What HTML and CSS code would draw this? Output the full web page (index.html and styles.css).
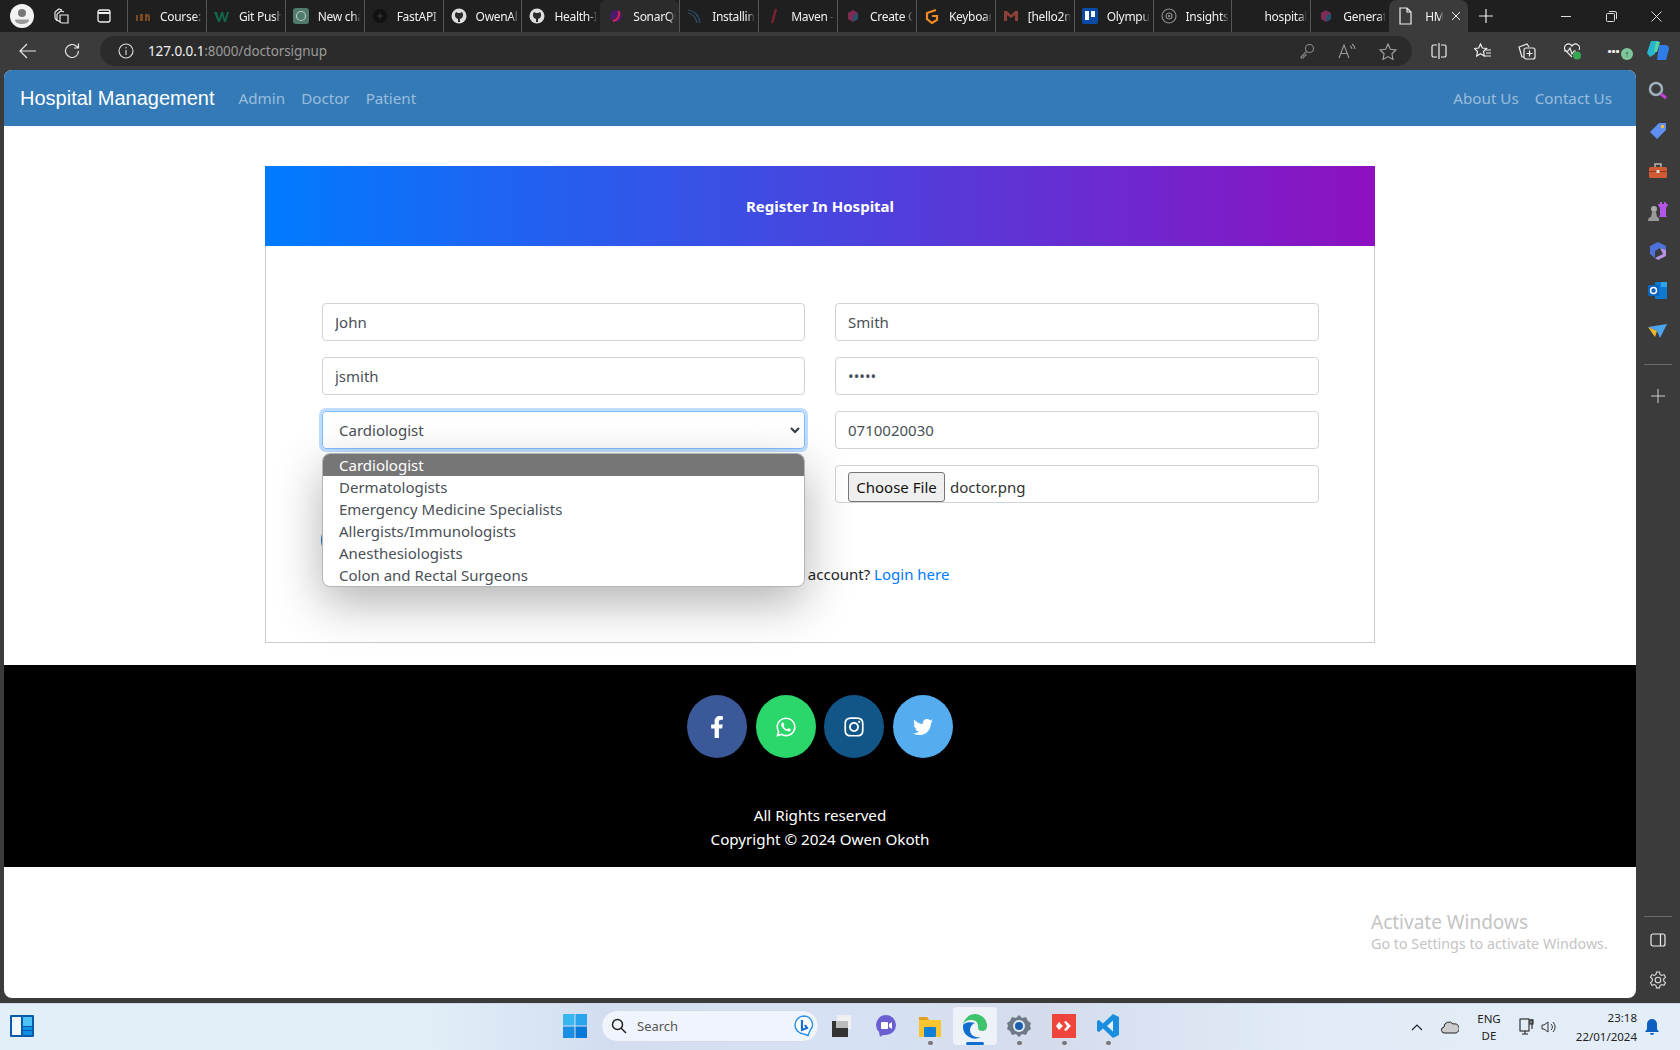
FILE: index.html
```html
<!DOCTYPE html>
<html lang="en">
<head>
<meta charset="utf-8">
<title>HMS</title>
<link rel="stylesheet" href="styles.css">
</head>
<body>
<header class="tabstrip">
  <div class="strip-left">
    <span class="avatar"><svg width="24" height="24" viewBox="0 0 24 24"><circle cx="12" cy="12" r="12" fill="#f2f2f2"/><circle cx="12" cy="9" r="4" fill="#777"/><path d="M5 15.5h14c0 3-3 4.5-7 4.5s-7-1.500-7-4.500z" fill="#999"/></svg></span>
    <svg class="strip-ico" width="18" height="18" viewBox="0 0 18 18" fill="none" stroke="#e8e8e8" stroke-width="1.200"><path d="M2 5l4-3 3 1M4 7l4-3 3 1M7 8h8v8H9a2 2 0 0 1-2-2zM2 5v6l2 3M4 7v6l3 2"/></svg>
    <svg class="strip-ico2" width="16" height="16" viewBox="0 0 16 16" fill="none" stroke="#eee" stroke-width="1.300"><rect x="2" y="2" width="12" height="12" rx="2"/><path d="M2 5h12" stroke-width="2"/></svg>
  </div>
  <div class="tabs">
    <div class="tab"><svg class="fav" width="16" height="16" viewBox="0 0 16 16"><path d="M1 13V7h2v6zm4 0V6h3v7zm5 0V6h2a3 3 0 0 1 3 3v4h-2V9h-1v4z" fill="#7a4a22"/></svg><span class="tab-label">Course:</span></div>
    <div class="tab"><svg class="fav" width="16" height="16" viewBox="0 0 16 16"><path d="M0 4h3l2 7 2-7h2l2 7 2-7h2l-3 10h-2L8 8l-2 6H4z" fill="#14664a"/></svg><span class="tab-label">Git Push</span></div>
    <div class="tab"><svg class="fav" width="16" height="16" viewBox="0 0 16 16"><rect width="16" height="16" rx="3" fill="#4f7a6c"/><circle cx="8" cy="8" r="4.500" fill="none" stroke="#b7c9c3" stroke-width="1.200"/></svg><span class="tab-label">New cha</span></div>
    <div class="tab"><svg class="fav" width="16" height="16" viewBox="0 0 16 16"><circle cx="8" cy="8" r="7" fill="#111"/><path d="M9 3L5 9h3l-1 4 4-6H8z" fill="#333"/></svg><span class="tab-label">FastAPI</span></div>
    <div class="tab"><svg class="fav" width="16" height="16" viewBox="0 0 16 16"><circle cx="8" cy="8" r="7.500" fill="#ddd"/><path d="M4 6l1-2 2 1h2l2-1 1 2v2l-1 2-2 1v3H7v-3L5 10 4 8z" fill="#2a2a2a"/></svg><span class="tab-label">OwenAl</span></div>
    <div class="tab"><svg class="fav" width="16" height="16" viewBox="0 0 16 16"><circle cx="8" cy="8" r="7.500" fill="#ddd"/><path d="M4 6l1-2 2 1h2l2-1 1 2v2l-1 2-2 1v3H7v-3L5 10 4 8z" fill="#2a2a2a"/></svg><span class="tab-label">Health-I</span></div>
    <div class="tab tab-hover"><svg class="fav" width="16" height="16" viewBox="0 0 16 16"><circle cx="8" cy="8" r="6" fill="#4a1a6b"/><path d="M5 13c5-1 7-5 6-10" stroke="#d8234f" stroke-width="2" fill="none"/></svg><span class="tab-label">SonarQu</span></div>
    <div class="tab"><svg class="fav" width="16" height="16" viewBox="0 0 16 16" fill="none" stroke="#31506b" stroke-width="1.200"><path d="M1 2c7 1 11 6 12 13M1 5c5 1 8 5 9 10"/></svg><span class="tab-label">Installing</span></div>
    <div class="tab"><svg class="fav" width="16" height="16" viewBox="0 0 16 16"><path d="M10 1L6 15" stroke="#7c2233" stroke-width="2.400"/></svg><span class="tab-label">Maven -</span></div>
    <div class="tab"><svg class="fav" width="16" height="16" viewBox="0 0 16 16"><path d="M8 2l5 3v6l-5 3-5-3V5z" fill="#7d2c55"/><path d="M8 8l5-3v6l-5 3z" fill="#26506b"/></svg><span class="tab-label">Create C</span></div>
    <div class="tab"><svg class="fav" width="16" height="16" viewBox="0 0 16 16" fill="none" stroke="#f08a24" stroke-width="2.200"><path d="M12 2L3 5v6l5 4 5-3V8H8"/></svg><span class="tab-label">Keyboar</span></div>
    <div class="tab"><svg class="fav" width="16" height="16" viewBox="0 0 16 16"><path d="M1 3h3l4 4 4-4h3v10h-3V7L8 10 4 7v6H1z" fill="#8d4038"/></svg><span class="tab-label">[hello2m</span></div>
    <div class="tab"><svg class="fav" width="16" height="16" viewBox="0 0 16 16"><rect width="16" height="16" rx="2" fill="#0b4ba8"/><rect x="3" y="3" width="4" height="9" fill="#fff"/><rect x="9" y="3" width="4" height="6" fill="#fff"/></svg><span class="tab-label">Olympu</span></div>
    <div class="tab"><svg class="fav" width="16" height="16" viewBox="0 0 16 16" fill="none" stroke="#8a8a8a" stroke-width="1.200"><circle cx="8" cy="8" r="7"/><circle cx="8" cy="8" r="3"/><circle cx="8" cy="8" r=".6"/></svg><span class="tab-label">Insights</span></div>
    <div class="tab"><span class="fav"></span><span class="tab-label">hospital</span></div>
    <div class="tab"><svg class="fav" width="16" height="16" viewBox="0 0 16 16"><path d="M8 2l5 3v6l-5 3-5-3V5z" fill="#7d2c55"/><path d="M8 8l5-3v6l-5 3z" fill="#26506b"/></svg><span class="tab-label">Generat</span></div>
    <div class="tab tab-active"><svg class="fav" width="16" height="18" viewBox="0 0 16 18" fill="none" stroke="#eee" stroke-width="1.200"><path d="M3 1h7l4 4v12H3zM10 1v4h4"/></svg><span class="tab-label short">HMS</span><svg class="tab-close" width="10" height="10" viewBox="0 0 10 10" stroke="#eee"><path d="M1 1l8 8M9 1l-8 8"/></svg></div>
    <svg class="new-tab" width="14" height="14" viewBox="0 0 14 14" stroke="#eee" stroke-width="1.200"><path d="M7 0v14M0 7h14"/></svg>
  </div>
  <div class="win-controls">
    <svg width="10" height="10" viewBox="0 0 10 10" stroke="#ddd"><path d="M0 5.500h10"/></svg>
    <svg width="11" height="11" viewBox="0 0 11 11" stroke="#ddd" fill="none"><rect x=".5" y="2.500" width="8" height="8" rx="1"/><path d="M3 .5h6a1.500 1.500 0 0 1 1.500 1.500v6"/></svg>
    <svg width="11" height="11" viewBox="0 0 11 11" stroke="#ddd"><path d="M.5.5l10 10M10.500.5l-10 10"/></svg>
  </div>
</header>

<div class="toolbar">
  <svg class="nav-back" width="18" height="16" viewBox="0 0 18 16" fill="none" stroke="#e6e6e6" stroke-width="1.200"><path d="M17 8H1M8 1L1 8l7 7"/></svg>
  <svg class="nav-reload" width="18" height="18" viewBox="0 0 18 18" fill="none" stroke="#e6e6e6" stroke-width="1.200"><path d="M15.500 9a6.500 6.500 0 1 1-2-4.700L15.500 6M15.500 1.500V6H11"/></svg>
  <div class="address">
    <svg class="info" width="16" height="16" viewBox="0 0 16 16" fill="none" stroke="#ddd" stroke-width="1.100"><circle cx="8" cy="8" r="7"/><path d="M8 7v5M8 4v1.500"/></svg>
    <span class="url"><span class="url-host">127.0.0.1</span>:8000/doctorsignup</span>
    <span class="addr-icons">
      <svg width="16" height="16" viewBox="0 0 16 16" fill="none" stroke="#8a8a8a" stroke-width="1.100"><circle cx="10.500" cy="5.500" r="4"/><path d="M7.500 8.500L2 14v1h2l1-1v-1h1l1-1v-1"/></svg>
      <svg width="18" height="16" viewBox="0 0 18 16" fill="none" stroke="#9a9a9a" stroke-width="1.100"><path d="M1 15L6 2l5 13M3 10.500h6M12 3a4 4 0 0 1 2 3M14 1a7 7 0 0 1 3 5"/></svg>
      <svg width="18" height="17" viewBox="0 0 18 17" fill="none" stroke="#a5a5a5" stroke-width="1.100"><path d="M9 1l2.400 5.200 5.600.7-4.100 3.900 1.100 5.600L9 13.600l-5 2.800 1.100-5.600L1 6.900l5.600-.7z"/></svg>
    </span>
  </div>
  <div class="tool-icons">
    <svg width="16" height="16" viewBox="0 0 16 16" fill="none" stroke="#eee" stroke-width="1.200"><path d="M6 2H2.500A1.500 1.500 0 0 0 1 3.500v9A1.500 1.500 0 0 0 2.500 14H6M10 2h3.500A1.500 1.500 0 0 1 15 3.500v9a1.500 1.500 0 0 1-1.500 1.500H10M8 0v16"/></svg>
    <svg width="18" height="17" viewBox="0 0 18 17" fill="none" stroke="#eee" stroke-width="1.200"><path d="M6.500 1l1.800 4 4.200.5-3 3 .8 4.500-3.800-2.200L2.700 13l.8-4.500-3-3 4.200-.5zM12 7h5M12 10h5M11 13h6"/></svg>
    <svg width="18" height="18" viewBox="0 0 18 18" fill="none" stroke="#eee" stroke-width="1.200"><path d="M6 15H4L1 5l8-3 2 3"/><rect x="6" y="6" width="11" height="11" rx="2"/><path d="M11.500 8.500v6M8.500 11.500h6"/></svg>
    <svg width="18" height="18" viewBox="0 0 18 18" fill="none" stroke="#eee" stroke-width="1.200"><path d="M9 15L2 8a4 4 0 0 1 7-4 4 4 0 0 1 7 4M1 9h4l2-3 2 6 2-3h2"/><circle cx="14" cy="13.500" r="4" fill="#38a853" stroke="none"/></svg>
    <span class="more">···<span class="update">↑</span></span>
  </div>
  <svg class="copilot" width="24" height="24" viewBox="0 0 24 24"><path d="M5 2h8L9 15 4 18l-3-4z" fill="#28b3cf"/><path d="M13 6h6a4 4 0 0 1 4 4l-3 11h-9z" fill="#2f7ce8"/><path d="M10 3h4l-3 10H8z" fill="#55d6a0"/></svg>
</div>

<div class="browser-body">
  <main class="page">
    <nav class="navbar">
      <a class="brand">Hospital Management</a>
      <a class="nav-link">Admin</a>
      <a class="nav-link">Doctor</a>
      <a class="nav-link">Patient</a>
      <span class="nav-spacer"></span>
      <a class="nav-link">About Us</a>
      <a class="nav-link">Contact Us</a>
    </nav>

    <section class="card">
      <div class="card-head">Register In Hospital</div>
      <form class="card-body">
        <div class="form-grid">
          <input class="field" value="John">
          <input class="field" value="Smith">
          <input class="field" value="jsmith">
          <input class="field" type="password" value="12345">
          <div class="select-wrap">
            <div class="select-box">Cardiologist<svg class="chev" width="10" height="7" viewBox="0 0 10 7" fill="none" stroke="#343a40" stroke-width="2"><path d="M1 1l4 4 4-4"/></svg></div>
            <ul class="dropdown">
              <li class="opt opt-on">Cardiologist</li>
              <li class="opt">Dermatologists</li>
              <li class="opt">Emergency Medicine Specialists</li>
              <li class="opt">Allergists/Immunologists</li>
              <li class="opt">Anesthesiologists</li>
              <li class="opt">Colon and Rectal Surgeons</li>
            </ul>
          </div>
          <input class="field" value="0710020030">
          <input class="field" value="">
          <div class="file-box"><span class="file-btn">Choose File</span><span>doctor.png</span></div>
        </div>
        <button class="submit" type="button"></button>
        <p class="login-line">Already have an account? <a class="login-link">Login here</a></p>
      </form>
    </section>

    <footer class="footer">
      <div class="socials">
        <span class="social fb"><svg width="14" height="22" viewBox="0 0 320 512"><path fill="#fff" d="M279.14 288l14.22-92.66h-88.91v-60.13c0-25.35 12.42-50.06 52.24-50.06h40.42V6.26S260.43 0 225.36 0c-73.22 0-121.08 44.38-121.08 124.72v70.62H22.89V288h81.39v224h100.17V288z"/></svg></span>
        <span class="social wa"><svg width="20" height="22" viewBox="0 0 448 512"><path fill="#fff" d="M380.9 97.1C339 55.1 283.2 32 223.9 32c-122.4 0-222 99.6-222 222 0 39.1 10.2 77.3 29.6 111L0 480l117.7-30.9c32.4 17.7 68.9 27 106.1 27h.1c122.3 0 224.1-99.6 224.1-222 0-59.3-25.2-115-67.1-157zm-157 341.6c-33.2 0-65.7-8.9-94-25.7l-6.7-4-69.8 18.3L72 359.2l-4.4-7c-18.5-29.4-28.2-63.3-28.2-98.2 0-101.7 82.8-184.5 184.6-184.5 49.3 0 95.6 19.2 130.4 54.1 34.8 34.9 56.2 81.2 56.1 130.5 0 101.8-84.9 184.6-186.6 184.6zm101.2-138.2c-5.5-2.8-32.8-16.2-37.9-18-5.1-1.9-8.8-2.8-12.5 2.8-3.7 5.6-14.3 18-17.6 21.8-3.2 3.7-6.5 4.2-12 1.4-32.6-16.3-54-29.1-75.5-66-5.7-9.8 5.7-9.1 16.3-30.3 1.8-3.7.9-6.9-.5-9.7-1.4-2.8-12.5-30.1-17.1-41.2-4.5-10.8-9.1-9.3-12.5-9.5-3.2-.2-6.9-.2-10.6-.2-3.7 0-9.7 1.4-14.8 6.9-5.1 5.6-19.4 19-19.4 46.3 0 27.3 19.9 53.7 22.6 57.4 2.8 3.7 39.1 59.7 94.8 83.8 35.2 15.2 49 16.5 66.6 13.9 10.7-1.6 32.8-13.4 37.4-26.4 4.6-13 4.6-24.1 3.2-26.4-1.3-2.5-5-3.9-10.5-6.6z"/></svg></span>
        <span class="social ig"><svg width="20" height="22" viewBox="0 0 448 512"><path fill="#fff" d="M224.1 141c-63.6 0-114.9 51.3-114.9 114.9s51.3 114.9 114.9 114.9S339 319.5 339 255.9 287.7 141 224.1 141zm0 189.6c-41.1 0-74.7-33.5-74.7-74.7s33.5-74.7 74.7-74.7 74.7 33.5 74.7 74.7-33.6 74.7-74.7 74.7zm146.4-194.3c0 14.9-12 26.8-26.8 26.8-14.9 0-26.8-12-26.8-26.8s12-26.8 26.8-26.8 26.8 12 26.8 26.8zm76.1 27.2c-1.7-35.9-9.9-67.7-36.2-93.9-26.2-26.2-58-34.4-93.9-36.2-37-2.1-147.9-2.1-184.9 0-35.8 1.7-67.6 9.9-93.9 36.1s-34.4 58-36.2 93.9c-2.1 37-2.1 147.9 0 184.9 1.7 35.9 9.9 67.7 36.2 93.9s58 34.4 93.9 36.2c37 2.1 147.9 2.1 184.9 0 35.9-1.7 67.7-9.9 93.9-36.2 26.2-26.2 34.4-58 36.2-93.9 2.1-37 2.1-147.8 0-184.8zM398.8 388c-7.8 19.6-22.9 34.7-42.6 42.6-29.5 11.7-99.5 9-132.1 9s-102.7 2.6-132.1-9c-19.6-7.8-34.7-22.9-42.6-42.6-11.7-29.5-9-99.5-9-132.1s-2.6-102.7 9-132.1c7.8-19.6 22.9-34.7 42.6-42.6 29.5-11.7 99.5-9 132.1-9s102.7-2.6 132.1 9c19.6 7.800 34.7 22.9 42.6 42.6 11.7 29.5 9 99.5 9 132.1s2.7 102.7-9 132.1z"/></svg></span>
        <span class="social tw"><svg width="20" height="20" viewBox="0 0 512 512"><path fill="#fff" d="M459.37 151.716c.325 4.548.325 9.097.325 13.645 0 138.72-105.583 298.558-298.558 298.558-59.452 0-114.68-17.219-161.137-47.106 8.447.974 16.568 1.299 25.34 1.299 49.055 0 94.213-16.568 130.274-44.832-46.132-.975-84.792-31.188-98.112-72.772 6.498.974 12.995 1.624 19.818 1.624 9.421 0 18.843-1.3 27.614-3.573-48.081-9.747-84.143-51.98-84.143-102.985v-1.299c13.969 7.797 30.214 12.67 47.431 13.319-28.264-18.843-46.781-51.005-46.781-87.391 0-19.492 5.197-37.36 14.294-52.954 51.655 63.675 129.3 105.258 216.365 109.807-1.624-7.797-2.599-15.918-2.599-24.04 0-57.828 46.782-104.934 104.934-104.934 30.213 0 57.502 12.67 76.67 33.137 23.715-4.548 46.456-13.32 66.599-25.34-7.798 24.366-24.366 44.833-46.132 57.827 21.117-2.273 41.584-8.122 60.426-16.243-14.292 20.791-32.161 39.308-52.628 54.253z"/></svg></span>
      </div>
      <p class="foot-text">All Rights reserved<br>Copyright © 2024 Owen Okoth</p>
    </footer>

    <div class="watermark">
      <div class="wm-title">Activate Windows</div>
      <div class="wm-sub">Go to Settings to activate Windows.</div>
    </div>
  </main>

  <aside class="sidebar">
    <svg width="20" height="20" viewBox="0 0 20 20" fill="none"><circle cx="8" cy="8" r="6" stroke="#9fb0bd" stroke-width="2.500"/><path d="M13 13l5 4" stroke="#c341d8" stroke-width="3"/></svg>
    <svg width="20" height="20" viewBox="0 0 20 20"><path d="M11 2h7v7l-9 9-7-7z" fill="#5f8ff0"/><circle cx="14.500" cy="5.500" r="1.800" fill="#f2c230"/></svg>
    <svg width="20" height="20" viewBox="0 0 20 20"><path d="M7 6V3h6v3" fill="none" stroke="#bbb" stroke-width="1.400"/><rect x="1" y="6" width="18" height="11" rx="1.500" fill="#cf5a33"/><rect x="1" y="10" width="18" height="1" fill="#8f3a1e"/><rect x="8.500" y="9" width="3" height="3" fill="#ddd"/></svg>
    <svg width="22" height="20" viewBox="0 0 22 20"><path d="M13 1h2v2h2V1h2v2h2v1l-2 3v7l1 2h-8l1-2V7l-2-3V3h2z" fill="#b255e8"/><circle cx="7" cy="8" r="3" fill="#aaa"/><path d="M5 11h4l1 5H4zM1 20c0-2 1-4 3-4h6c2 0 2 2 2 4z" fill="#999"/></svg>
    <svg width="20" height="20" viewBox="0 0 20 20"><path d="M10 1l8 4v4l-6-2-5 3v7l-5-4V5z" fill="#4d72da"/><path d="M18 9v6l-8 4-3-2 8-4-3-6z" fill="#b693e4"/></svg>
    <svg width="20" height="20" viewBox="0 0 20 20"><path d="M7 1h12v17H7z" fill="#0f78d0"/><path d="M13 1h6v5h-6z" fill="#2aa5e8"/><rect x="0" y="4" width="11" height="11" rx="1" fill="#0a62c0"/><circle cx="5.500" cy="9.500" r="3" fill="none" stroke="#fff" stroke-width="1.500"/></svg>
    <svg width="20" height="20" viewBox="0 0 20 20"><path d="M0 6l19-3-7 14-3-7z" fill="#4aa4ee"/><path d="M0 6l9 4-2 6z" fill="#f0b62e"/></svg>
    <span class="side-rule"></span>
    <svg width="14" height="14" viewBox="0 0 14 14" stroke="#cfcfcf" stroke-width="1"><path d="M7 0v14M0 7h14"/></svg>
    <span class="side-spacer"></span>
    <span class="side-rule side-rule-low"></span>
    <svg width="16" height="14" viewBox="0 0 16 14" fill="none" stroke="#eee" stroke-width="1.200"><rect x="1" y="1" width="14" height="12" rx="2"/><path d="M10.500 1v12"/></svg>
    <svg class="side-gear" width="18" height="18" viewBox="0 0 18 18" fill="none" stroke="#ddd" stroke-width="1.100"><circle cx="9" cy="9" r="2.800"/><path d="M7.500 1h3l.5 2.400 1.700 1 2.300-.8 1.500 2.600-1.800 1.600v2.300l1.800 1.600-1.500 2.600-2.300-.8-1.700 1-.5 2.400h-3L7 14.500l-1.700-1-2.300.8-1.500-2.600 1.800-1.600V7.800L1.500 6.200 3 3.600l2.300.8 1.700-1z"/></svg>
  </aside>
</div>

<footer class="taskbar">
  <svg class="widgets" width="24" height="22" viewBox="0 0 24 22"><rect width="24" height="22" rx="1" fill="#0a5cab"/><rect x="2" y="2" width="9" height="18" fill="#f4f7fa"/><rect x="13" y="2" width="9" height="9" fill="#4dc4f5"/><rect x="13" y="12" width="9" height="3" fill="#0f8fe6"/><rect x="13" y="16" width="9" height="4" fill="#0f8fe6"/></svg>
  <div class="task-center">
    <svg class="start" width="24" height="24" viewBox="0 0 24 24"><rect width="11.500" height="11.500" fill="#38b6f0"/><rect x="12.500" width="11.500" height="11.500" fill="#2aa4ec"/><rect y="12.500" width="11.500" height="11.500" fill="#1a8fe4"/><rect x="12.500" y="12.500" width="11.500" height="11.500" fill="#0a78d8"/></svg>
    <div class="search">
      <svg width="16" height="16" viewBox="0 0 16 16" fill="none" stroke="#222" stroke-width="1.500"><circle cx="6.500" cy="6.500" r="5"/><path d="M10 10l5 5"/></svg>
      <span class="search-text">Search</span>
      <svg class="bing" width="20" height="24" viewBox="0 0 20 24"><path d="M10 2a8.500 8.500 0 0 1 6 14.500l-2 5-4-1.500A9 9 0 0 1 10 2z" fill="#fff" stroke="#2a8fe8" stroke-width="1.400"/><path d="M8 6v10l5-2-2-3" fill="none" stroke="#1a6fd0" stroke-width="2.200"/></svg>
    </div>
    <div class="task-app"><svg width="22" height="22" viewBox="0 0 22 22"><rect x="7" y="0" width="14" height="14" fill="#f0f0f0"/><rect x="2" y="6" width="16" height="16" fill="#333"/><rect x="6" y="6" width="12" height="7" fill="#bbb"/></svg></div>
    <div class="task-app"><svg width="24" height="24" viewBox="0 0 24 24"><path d="M12 1a10 10 0 0 1 0 20c-2 0-4 0-6 2l-1-5A10 10 0 0 1 12 1z" fill="#6a5fd0"/><rect x="7" y="8" width="7" height="7" rx="1" fill="#fff"/><path d="M15 10l3-2v7l-3-2z" fill="#fff"/></svg></div>
    <div class="task-app"><svg width="24" height="24" viewBox="0 0 24 24"><path d="M1 3h8l2 3h12v17H1z" fill="#f7c530"/><path d="M1 3h8l2 3H1z" fill="#e0a020"/><rect x="6" y="13" width="12" height="10" rx="1" fill="#0f7fd8"/></svg><span class="task-dot"></span></div>
    <div class="task-app task-on"><svg width="26" height="26" viewBox="0 0 26 26"><path d="M13 1a12 12 0 0 1 12 12c0 3-2 5-5 5-4 0-4-3-4-5 0-4-3-6-7-6C5 7 2 9 1 12 2 6 7 1 13 1z" fill="#3ec46d"/><path d="M1 13a12 12 0 0 0 18 11c-5 1-11-1-11-7 0-3 2-6 5-7-6-2-12 0-12 3z" fill="#0f6fd0"/></svg><span class="task-bar"></span></div>
    <div class="task-app"><svg width="24" height="24" viewBox="0 0 24 24"><path d="M12 1l3 3 4-1 2 4 3 2-1 3 1 3-3 2-2 4-4-1-3 3-3-3-4 1-2-4-3-2 1-3-1-3 3-2 2-4 4 1z" fill="#6d7a86"/><circle cx="12" cy="12" r="6" fill="#dfe8f2"/><circle cx="12" cy="12" r="4" fill="#1a5fb0"/></svg><span class="task-dot"></span></div>
    <div class="task-app"><svg width="24" height="24" viewBox="0 0 24 24"><rect width="24" height="24" fill="#ef443b"/><path d="M7 8l4 4-4 4-3-4zM14 7l5 5-5 5-2-1 3-4-3-4z" fill="#fff"/></svg><span class="task-dot"></span></div>
    <div class="task-app"><svg width="24" height="24" viewBox="0 0 24 24"><path d="M17 0l6 3v18l-6 3L7 14.500 3 18l-2-1V7l2-1 4 3.500z" fill="#1a8ede"/><path d="M17 6.500L11 12l6 5.500z" fill="#e6f0fa"/></svg><span class="task-dot"></span></div>
  </div>
  <div class="tray">
    <svg width="12" height="8" viewBox="0 0 12 8" fill="none" stroke="#222" stroke-width="1.200"><path d="M1 7l5-5 5 5"/></svg>
    <svg class="tray-cloud" width="18" height="14" viewBox="0 0 18 14" fill="#ccc" stroke="#222"><path d="M4 13a3 3 0 0 1-1-6 5 5 0 0 1 9-3 4 4 0 0 1 3 9z"/></svg>
    <div class="lang">ENG<br>DE</div>
    <svg class="tray-net" width="16" height="18" viewBox="0 0 16 18" fill="none" stroke="#222" stroke-width="1.100"><rect x="1" y="1" width="9" height="12"/><path d="M3 16h6M6 13v3M13 1v10"/><rect x="11" y="2" width="3" height="4"/></svg>
    <svg width="16" height="16" viewBox="0 0 16 16" fill="none" stroke="#333"><path d="M1 6v4h2l4 3V3L3 6zM10 5a4 4 0 0 1 0 6M12 3a7 7 0 0 1 0 10"/></svg>
    <div class="clock">23:18<br>22/01/2024</div>
    <svg class="bell" width="14" height="16" viewBox="0 0 14 16"><path d="M7 0a5 5 0 0 1 5 5v5l2 3H0l2-3V5a5 5 0 0 1 5-5zM5 14h4a2 2 0 0 1-4 0z" fill="#0f5fc0"/></svg>
  </div>
</footer>
</body>
</html>
```
FILE: styles.css
```css
* { box-sizing: border-box; }
html, body { margin: 0; height: 100%; }
body {
  width: 1680px;
  height: 1050px;
  overflow: hidden;
  display: flex;
  flex-direction: column;
  background: #3b3b3b;
  font-family: "Noto Sans", "Open Sans", sans-serif;
  font-size: 15px;
  color: #212529;
}

/* browser tab strip */
.tabstrip { height: 32px; flex: none; display: flex; align-items: stretch; background: #1f1f1f; color: #f0f0f0; }
.strip-left { width: 127px; display: flex; align-items: center; padding-left: 10px; }
.avatar { width: 24px; height: 24px; display: flex; }
.strip-ico { margin-left: 19px; }
.strip-ico2 { margin-left: 25px; }
.tabs { display: flex; align-items: stretch; }
.tab {
  width: 78.900px;
  flex: none;
  display: flex;
  align-items: center;
  padding-left: 7px;
  font-size: 12px;
  border-left: 1px solid #555;
  overflow: hidden;
  white-space: nowrap;
}
.tab-hover { background: #2b2b2b; border-radius: 6px 6px 0 0; border-left-color: transparent; }
.tab-active { background: #3b3b3b; border-radius: 8px 8px 0 0; border-left-color: transparent; }
.fav { width: 16px; height: 16px; flex: none; margin-right: 9px; }
.tab-label { width: 43px; overflow: hidden; display: block; letter-spacing: -.3px; -webkit-mask-image: linear-gradient(to right, #000 82%, transparent); mask-image: linear-gradient(to right, #000 82%, transparent); }
.tab-active .fav { height: 18px; }
.short { width: 18px; margin-left: 3px; }
.tab-close { margin-left: 8px; }
.new-tab { margin: 9px 0 0 11px; }
.win-controls { margin-left: auto; width: 119px; display: flex; align-items: center; justify-content: space-between; padding-right: 18px; }

/* toolbar */
.toolbar { height: 38px; flex: none; display: flex; align-items: center; background: #3b3b3b; color: #eee; }
.nav-back { margin-left: 19px; }
.nav-reload { margin-left: 26px; }
.address { margin-left: 19px; width: 1312px; height: 30px; border-radius: 15px; background: #2b2b2b; display: flex; align-items: center; padding: 0 15px 0 18px; }
.url { margin-left: 14px; font-size: 13.500px; color: #9a9a9a; letter-spacing: -.1px; }
.url-host { color: #f2f2f2; }
.addr-icons { margin-left: auto; display: flex; align-items: center; gap: 23px; }
.tool-icons { margin-left: 19px; display: flex; align-items: center; gap: 26.500px; width: 215px; flex: none; }
.more { position: relative; font-size: 18px; font-weight: 700; letter-spacing: -1px; line-height: 1; }
.update { position: absolute; left: 14px; top: 6px; width: 12px; height: 12px; border-radius: 50%; background: #7fc79a; color: #123; font-size: 9px; text-align: center; letter-spacing: 0; line-height: 12px; }
.copilot { flex: none; }

/* layout of page + right bar */
.browser-body { height: 933px; flex: none; display: flex; }
.page { width: 1632px; height: 928px; margin-left: 4px; background: #fff; border-radius: 8px; overflow: hidden; position: relative; }
.sidebar { width: 44px; padding-top: 11px; padding-bottom: 14px; display: flex; flex-direction: column; align-items: center; gap: 20px; }
.sidebar svg { flex: none; }
.side-rule { width: 28px; height: 1px; flex: none; background: #6a6a6a; margin: 3px 0 4px; }
.side-rule-low { margin: 0 0 -4px; }
.side-spacer { flex: 1; }
.side-gear { margin-top: 4px; }

/* navbar */
.navbar { height: 56px; background: #337ab7; display: flex; align-items: center; padding: 0 16px; }
.brand { color: #fff; font-family: "Liberation Sans", Arial, sans-serif; font-size: 20px; margin-right: 16px; }
.nav-link { color: rgba(255,255,255,.5); padding: 0 8px; font-size: 15.200px; }
.nav-spacer { flex: 1; }

/* card */
.card { width: 1110px; margin: 40px auto 0; border: 1px solid #ccc; border-top: 0; height: 477px; }
.card-head { height: 80px; margin: 0 -1px; background: linear-gradient(to right, #007bff, #8e10c0); color: #fff; font-weight: 700; font-size: 15px; display: flex; align-items: center; justify-content: center; }
.card-body { padding: 57px 55px 0 56px; }
.form-grid { display: grid; grid-template-columns: 483px 484px; column-gap: 30px; row-gap: 16px; grid-auto-rows: 38px; }
.field { width: 100%; height: 38px; border: 1px solid #ced4da; border-radius: 4px; padding: 0 12px; font: inherit; color: #495057; background: #fff; outline: 0; }
.select-wrap { position: relative; }
.select-box { height: 38px; border: 1px solid #80bdff; border-radius: 4px; box-shadow: 0 0 0 3px rgba(0,123,255,.25); padding: 0 4px 0 16px; display: flex; align-items: center; justify-content: space-between; color: #495057; }
.dropdown { position: absolute; z-index: 5; left: 0; top: 42px; width: 483px; margin: 0; padding: 0; list-style: none; background: #fff; border: 1px solid #b5b5b5; border-radius: 8px; overflow: hidden; box-shadow: 0 16px 48px rgba(0,0,0,.3); }
.opt { height: 22px; line-height: 22px; padding-left: 16px; color: #495057; white-space: nowrap; }
.opt-on { background: #767676; color: #fff; }
.file-box { height: 38px; border: 1px solid #ced4da; border-radius: 4px; display: flex; align-items: flex-start; padding: 6px 0 0 12px; gap: 5px; color: #333; overflow: hidden; line-height: 30px; }
.file-btn { width: 97px; height: 30px; border: 1px solid #767676; border-radius: 3px; background: #efefef; color: #111; display: flex; align-items: center; justify-content: center; }
.submit { display: block; width: 300px; height: 38px; margin: 18px 0 0 -1px; background: #0b6fc2; border: 0; border-radius: 19px; }
.login-line { margin: 3px 0 0; text-align: center; line-height: 24px; font-size: 15px; }
.login-link { color: #007bff; }

/* footer */
.footer { height: 202px; margin-top: 22px; background: #000; color: #fff; padding-top: 30px; text-align: center; }
.socials { display: flex; justify-content: center; gap: 8.500px; }
.social { width: 60px; height: 63px; border-radius: 50%; display: flex; align-items: center; justify-content: center; }
.fb { background: #3b5998; }
.wa { background: #2bd66b; }
.ig { background: #125688; }
.tw { background: #55acee; }
.foot-text { margin: 45px 0 0; line-height: 24px; font-size: 15.200px; }

/* windows activation overlay */
.watermark { position: absolute; left: 1367px; top: 840px; color: #c4c4c4; }
.wm-title { font-size: 19px; line-height: 24px; }
.wm-sub { font-size: 14.300px; line-height: 20px; }

/* windows taskbar */
.taskbar { height: 47px; flex: none; position: relative; display: flex; align-items: center; background: linear-gradient(to right, #e2eff8 0%, #e2eff8 25%, #d3ddf0 36%, #d6e2f4 50%, #d4dcec 62%, #e1ecf8 78%, #e4eef8 100%); border-top: 1px solid #cfd8e4; color: #222; }
.widgets { margin: -2px 0 0 10px; }
.task-center { position: absolute; left: 563px; top: 0; height: 44px; display: flex; align-items: center; }
.search { margin-left: 14px; width: 218px; height: 32px; border-radius: 16px; background: #f0f4fc; border: 1px solid #d5dbe8; display: flex; align-items: center; padding: 0 4px 0 9px; }
.search-text { margin-left: 10px; font-size: 13px; color: #555; }
.bing { margin-left: auto; }
.task-app { width: 44.500px; height: 38px; display: flex; align-items: center; justify-content: center; position: relative; border-radius: 4px; }
.task-on { background: rgba(255,255,255,.6); }
.task-dot { position: absolute; left: 20px; bottom: 0; width: 5px; height: 4px; border-radius: 2px; background: #777; }
.task-bar { position: absolute; left: 13px; bottom: 0; width: 18px; height: 3px; border-radius: 2px; background: #0f6fd0; }
.tray { margin-left: auto; display: flex; align-items: center; font-size: 11.500px; }
.tray-cloud { margin-left: 18px; }
.lang { margin-left: 10px; width: 48px; line-height: 17px; text-align: center; padding-right: 8px; }
.tray-net { margin-left: 2px; margin-right: 6px; }
.clock { margin-left: 10px; width: 70px; text-align: right; line-height: 19px; }
.bell { margin: 0 21px 0 8px; }
```
